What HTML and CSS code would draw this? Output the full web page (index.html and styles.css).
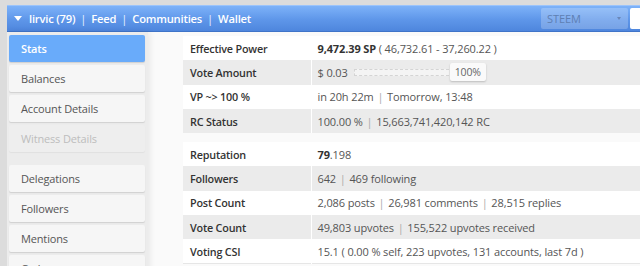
FILE: index.html
```html
<!DOCTYPE html>
<html>
<head>
<meta charset="utf-8">
<link rel="stylesheet" href="styles.css">
</head>
<body>
<div class="page">
  <header class="topbar">
    <nav class="nav">
      <span class="caret"></span>
      <a class="nav-link">lirvic (79)</a>
      <span class="sep">|</span>
      <a class="nav-link">Feed</a>
      <span class="sep">|</span>
      <a class="nav-link">Communities</a>
      <span class="sep">|</span>
      <a class="nav-link">Wallet</a>
    </nav>
    <div class="tools">
      <div class="select"><span>STEEM</span><span class="sel-caret"></span></div>
      <div class="search"></div>
    </div>
  </header>
  <div class="main">
    <aside class="sidebar">
      <div class="item active">Stats</div>
      <div class="item">Balances</div>
      <div class="item">Account Details</div>
      <div class="item disabled">Witness Details</div>
      <div class="item gap">Delegations</div>
      <div class="item">Followers</div>
      <div class="item">Mentions</div>
      <div class="item">Orders</div>
    </aside>
    <section class="content">
      <table class="stats">
        <tr><th>Effective Power</th><td><b>9,472.39 SP</b> ( 46,732.61 - 37,260.22 )</td></tr>
        <tr><th>Vote Amount</th><td><div class="vote"><span>$ 0.03</span><span class="bar"></span><span class="pct">100%</span></div></td></tr>
        <tr><th>VP ~&gt; 100 %</th><td>in 20h 22m <span class="pipe">|</span> Tomorrow, 13:48</td></tr>
        <tr><th>RC Status</th><td>100.00 % <span class="pipe">|</span> 15,663,741,420,142 RC</td></tr>
      </table>
      <table class="stats second">
        <tr><th>Reputation</th><td><b>79</b>.198</td></tr>
        <tr><th>Followers</th><td>642 <span class="pipe">|</span> 469 following</td></tr>
        <tr><th>Post Count</th><td>2,086 posts <span class="pipe">|</span> 26,981 comments <span class="pipe">|</span> 28,515 replies</td></tr>
        <tr><th>Vote Count</th><td>49,803 upvotes <span class="pipe">|</span> 155,522 upvotes received</td></tr>
        <tr><th>Voting CSI</th><td>15.1 ( 0.00 % self, 223 upvotes, 131 accounts, last 7d )</td></tr>
      </table>
    </section>
  </div>
</div>
</body>
</html>
```
FILE: styles.css
```css
html, body {
  margin: 0;
  padding: 0;
}
body {
  background: #dcdcdc;
  font-family: "Open Sans", "DejaVu Sans", sans-serif;
  overflow: hidden;
}
.page {
  margin: 5px 0 0 7px;
  background: #fafafa;
  height: 261px;
  overflow: hidden;
}
.topbar {
  height: 27px;
  box-sizing: border-box;
  background: linear-gradient(#7db2f9, #5e96e9 55%, #4e86dd);
  border-top: 1px solid #9cc4fb;
  border-bottom: 1px solid #3f74c8;
  display: flex;
  align-items: center;
  justify-content: space-between;
}
.nav {
  display: flex;
  align-items: center;
  gap: 5px;
  padding-left: 7px;
  color: #fff;
  font-weight: 600;
  font-size: 11.2px;
  letter-spacing: -0.2px;
}
.caret {
  width: 0;
  height: 0;
  border-left: 4.5px solid transparent;
  border-right: 4.5px solid transparent;
  border-top: 5px solid #fff;
  margin-right: 2px;
}
.nav-link { color: #fff; }
.sep { color: #e8f0ff; font-weight: 400; }
.tools {
  display: flex;
  align-items: center;
  gap: 2px;
}
.select {
  width: 87px;
  height: 21px;
  box-sizing: border-box;
  background: rgba(255,255,255,0.22);
  border-radius: 2px;
  display: flex;
  align-items: center;
  justify-content: space-between;
  padding: 0 7px 0 6px;
  font-size: 11px;
  letter-spacing: -0.1px;
  color: #5e7fb3;
}
.sel-caret {
  width: 0; height: 0;
  border-left: 2px solid transparent;
  border-right: 2px solid transparent;
  border-top: 3px solid #6a87b8;
}
.search {
  width: 10px;
  height: 21px;
  background: #fff;
  border-radius: 2px 0 0 2px;
}
.main {
  display: flex;
  align-items: flex-start;
}
.sidebar {
  width: 141px;
  box-sizing: border-box;
  padding: 3px 3px 0 2px;
  background: #ececec;
  box-shadow: 2px 0 6px rgba(0,0,0,0.08);
  display: flex;
  flex-direction: column;
  gap: 3px;
  height: 240px;
}
.item {
  height: 27px;
  line-height: 27px;
  padding-left: 12px;
  background: #f6f6f6;
  border-radius: 2px;
  font-size: 11px;
  letter-spacing: -0.15px;
  color: #555;
  box-shadow: 0 1px 1px rgba(0,0,0,0.12);
}
.item.active {
  background: #69abfa;
  color: #fff;
  font-weight: 600;
}
.item.disabled {
  background: #eeeeee;
  color: #bdbdbd;
  box-shadow: 0 1px 1px rgba(0,0,0,0.05);
}
.item.gap { margin-top: 10px; }
.content {
  flex: 1;
  margin-left: 35px;
  padding-top: 4px;
}
.stats {
  width: 100%;
  border-collapse: collapse;
  font-size: 11px;
  letter-spacing: -0.12px;
  color: #555;
}
.stats.second { margin-top: 9px; border-bottom: 1px solid #e6e6e6; }
.stats th {
  width: 128px;
  text-align: left;
  font-weight: 600;
  font-size: 10.8px;
  letter-spacing: -0.2px;
  color: #333;
  padding: 0 7px;
  height: 24.3px;
  box-sizing: border-box;
  border-right: 1px solid #fff;
}
.stats td {
  padding: 0 6px;
  height: 24.3px;
  box-sizing: border-box;
  white-space: nowrap;
}
.stats b { color: #333; font-weight: 700; }
.stats tr:nth-child(odd) { background: #fff; }
.stats tr:nth-child(even) { background: #ebebeb; }
.pipe { color: #aaa; padding: 0 1px; }
.vote {
  display: flex;
  align-items: center;
}
.bar {
  width: 94px;
  height: 5px;
  margin-left: 6px;
  border: 1px dashed #d4d4d4;
  border-right: none;
  background: #f4f4f4;
}
.pct {
  background: #fafafa;
  padding: 2px 5px;
  font-size: 10.5px;
  color: #666;
  box-shadow: 0 1px 2px rgba(0,0,0,0.2);
  border-radius: 2px;
  margin-left: 1px;
}
```
